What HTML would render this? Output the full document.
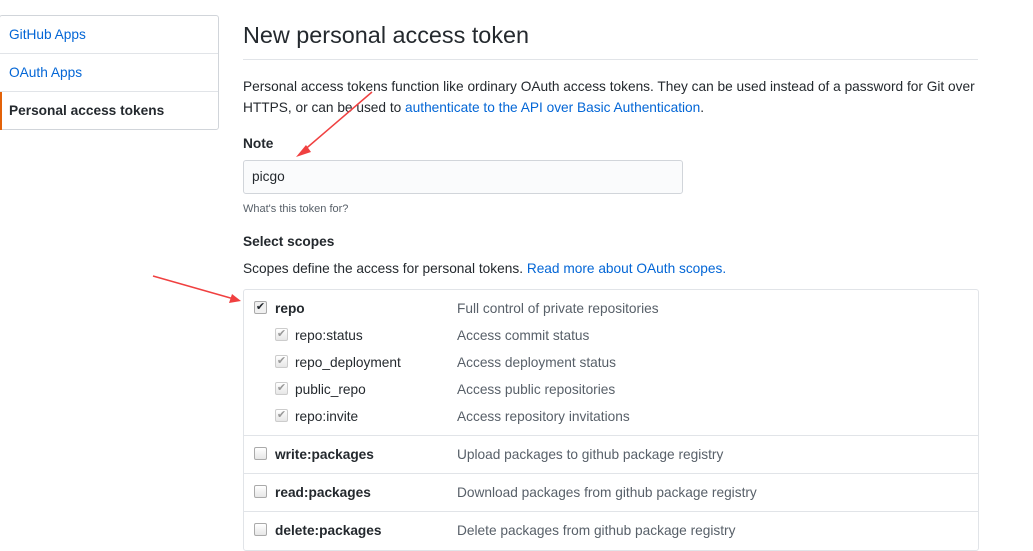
<!DOCTYPE html>
<html><head><meta charset="utf-8"><style>
body{margin:0;width:1033px;height:536px;overflow:hidden;background:#fff;font-family:"Liberation Sans",Arial,sans-serif;color:#24292e;font-size:13.7px;position:relative}
.a{position:absolute;white-space:nowrap;line-height:20px}
.side{position:absolute;left:-1px;top:15px;width:218px;height:113px;border:1px solid #d1d5da;border-radius:3px}
.side div{height:38px;line-height:38px;padding-left:9px;color:#0366d6;border-bottom:1px solid #e1e4e8;box-sizing:border-box}
.side div.sel{color:#24292e;border-left:2px solid #e36209;border-bottom:0;padding-left:7px;font-weight:bold}
.cb{position:absolute;width:11px;height:11px;border:1px solid #aaa;border-radius:2px;background:linear-gradient(#fff,#e6e6e6)}
.ck{font-size:11px;line-height:11px;text-align:center}
.hr{position:absolute;height:1px;background:#e1e4e8}
.d{color:#586069}
</style></head><body>
<div class="side"><div>GitHub Apps</div><div>OAuth Apps</div><div class="sel">Personal access tokens</div></div>
<div class="a" style="left:243px;top:20px;font-size:23.4px;line-height:30px">New personal access token</div>
<div class="hr" style="left:243px;top:59px;width:735px"></div>
<div class="a" style="left:243px;top:77px">Personal access tokens function like ordinary OAuth access tokens. They can be used instead of a password for Git over</div>
<div class="a" style="left:243px;top:98px">HTTPS, or can be used to <span style="color:#0366d6">authenticate to the API over Basic Authentication</span>.</div>
<div class="a" style="left:243px;top:134px;font-weight:bold">Note</div>
<div style="position:absolute;left:243px;top:160px;width:438px;height:32px;border:1px solid #d1d5da;border-radius:3px;background:#fafbfc"></div>
<div class="a" style="left:252px;top:167px">picgo</div>
<div class="a d" style="left:243px;top:199px;font-size:11px">What's this token for?</div>
<div class="a" style="left:243px;top:232px;font-weight:bold">Select scopes</div>
<div class="a" style="left:243px;top:259px">Scopes define the access for personal tokens. <span style="color:#0366d6">Read more about OAuth scopes.</span></div>
<div style="position:absolute;left:243px;top:289px;width:734px;height:260px;border:1px solid #e1e4e8;border-radius:3px"></div>
<div class="cb ck" style="left:254px;top:301px;background:#f0f0f0">✔</div>
<div class="a" style="left:275px;top:299px;font-weight:bold">repo</div><div class="a d" style="left:457px;top:299px">Full control of private repositories</div>
<div class="cb ck" style="left:275px;top:328px;color:#999;border-color:#ccc">✔</div><div class="a" style="left:295px;top:326px">repo:status</div><div class="a d" style="left:457px;top:326px">Access commit status</div>
<div class="cb ck" style="left:275px;top:355px;color:#999;border-color:#ccc">✔</div><div class="a" style="left:295px;top:353px">repo_deployment</div><div class="a d" style="left:457px;top:353px">Access deployment status</div>
<div class="cb ck" style="left:275px;top:382px;color:#999;border-color:#ccc">✔</div><div class="a" style="left:295px;top:380px">public_repo</div><div class="a d" style="left:457px;top:380px">Access public repositories</div>
<div class="cb ck" style="left:275px;top:409px;color:#999;border-color:#ccc">✔</div><div class="a" style="left:295px;top:407px">repo:invite</div><div class="a d" style="left:457px;top:407px">Access repository invitations</div>
<div class="hr" style="left:244px;top:435px;width:734px"></div>
<div class="cb" style="left:254px;top:447px"></div><div class="a" style="left:275px;top:445px;font-weight:bold">write:packages</div><div class="a d" style="left:457px;top:445px">Upload packages to github package registry</div>
<div class="hr" style="left:244px;top:473px;width:734px"></div>
<div class="cb" style="left:254px;top:485px"></div><div class="a" style="left:275px;top:483px;font-weight:bold">read:packages</div><div class="a d" style="left:457px;top:483px">Download packages from github package registry</div>
<div class="hr" style="left:244px;top:511px;width:734px"></div>
<div class="cb" style="left:254px;top:523px"></div><div class="a" style="left:275px;top:521px;font-weight:bold">delete:packages</div><div class="a d" style="left:457px;top:521px">Delete packages from github package registry</div>
<svg style="position:absolute;left:0;top:0" width="1033" height="536">
<line x1="372" y1="92" x2="302" y2="152" stroke="#f04040" stroke-width="1.5"/>
<polygon points="296,157 306,145 311,152" fill="#f04040"/>
<line x1="153" y1="276" x2="234" y2="299" stroke="#f04040" stroke-width="1.5"/>
<polygon points="241,301 229,303 232,294" fill="#f04040"/>
</svg>
</body></html>
